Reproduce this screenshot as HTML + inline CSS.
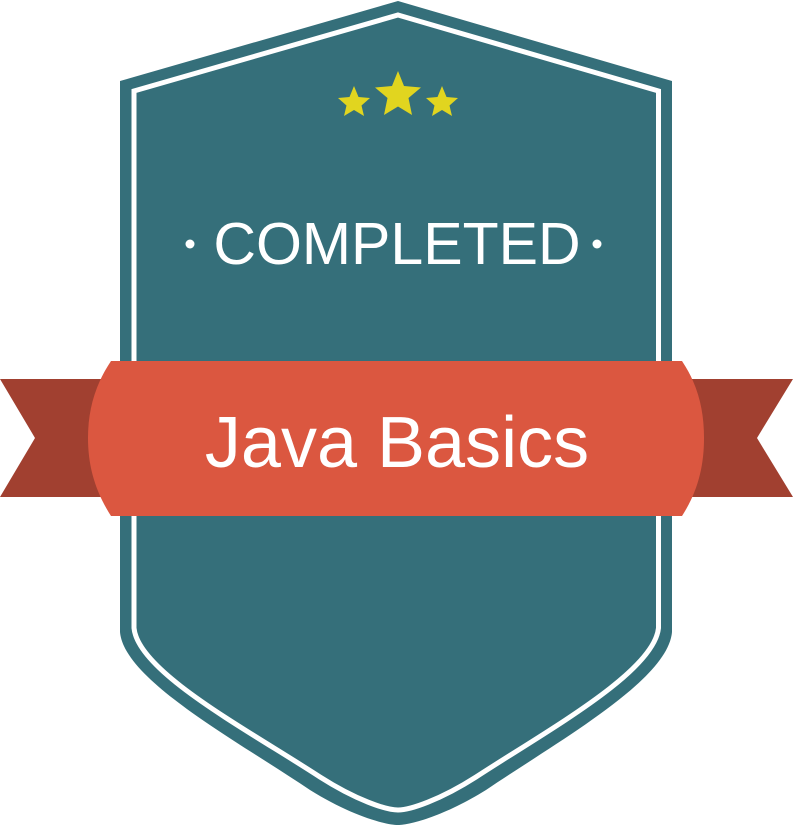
<!DOCTYPE html>
<html><head><style>
html,body{margin:0;padding:0;background:#fff;}
svg{display:block;}
</style></head><body>
<svg width="793" height="825" viewBox="0 0 793 825" xmlns="http://www.w3.org/2000/svg">
<path d="M398,1 L672,81 L672,632 C668,680 560,740 486,790 C446,815 411,825 398,825 C385,825 350,815 310,790 C236,740 124,680 120,632 L120,81 Z" fill="#356f7a"/>
<path d="M398,15 L658.5,91 L658.5,628 C654,672 548,730 476,777 C440,800 410,810 398,810 C386,810 356,800 320,777 C248,730 138,672 134,628 L134,91 Z" fill="none" stroke="#fff" stroke-width="5"/>
<g fill="#e1d51f">
<polygon points="354,86 358.5,97 370,98 361.5,105.5 364,116 354,110 344,116 346.5,105.5 338,98 349.5,97"/>
<polygon points="398,71 404,86 421,87.5 408.5,98 412,115 398,106.5 384,115 387.5,98 375,87.5 392,86"/>
<polygon points="442,86 446.5,97 458,98 449.5,105.5 452,116 442,110 432,116 434.5,105.5 426,98 437.5,97"/>
</g>
<circle cx="190" cy="244" r="4.5" fill="#fff"/>
<circle cx="597" cy="244" r="4.5" fill="#fff"/>
<text x="397" y="264" text-anchor="middle" font-family="Liberation Sans, sans-serif" font-size="59" fill="#fff">COMPLETED</text>
<polygon points="0,379 110,379 110,497 0,497 35,438" fill="#a14030"/>
<polygon points="793,379 683,379 683,497 793,497 757,438" fill="#a14030"/>
<path d="M111,361 L682,361 C698,385 704,410 704,438 C704,466 698,491 682,516 L111,516 C95,491 88,466 88,438 C88,410 95,385 111,361 Z" fill="#db5740"/>
<text x="397" y="467" text-anchor="middle" font-family="Liberation Sans, sans-serif" font-size="72" fill="#fff">Java Basics</text>
</svg>
</body></html>
